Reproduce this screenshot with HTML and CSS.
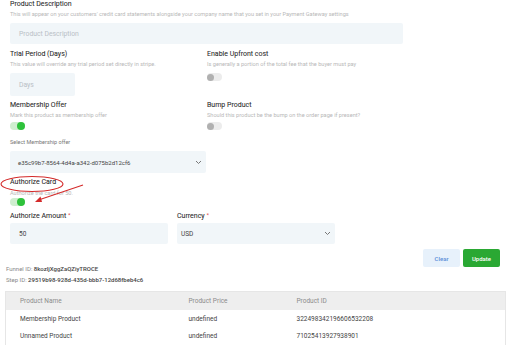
FILE: index.html
```html
<!DOCTYPE html>
<html lang="en">

<head>
    <meta charset="UTF-8">
    <meta name="viewport" content="width=device-width, initial-scale=1.0">
    <title>Product Settings</title>
    <link rel="stylesheet" href="styles.css">
</head>

<body>
    <div class="page">
        <div class="form">
            <div class="field">
                <div class="field-label">Product Description</div>
                <div class="hint">This will appear on your customers' credit card statements alongside your company name that you set in your Payment Gateway settings</div>
                <div class="input input-wide placeholder">Product Description</div>
            </div>

            <div class="row row-trial">
                <div class="field">
                    <div class="field-label">Trial Period (Days)</div>
                    <div class="hint">This value will override any trial period set directly in stripe.</div>
                    <div class="input input-days placeholder">Days</div>
                </div>
                <div class="field">
                    <div class="field-label">Enable Upfront cost</div>
                    <div class="hint">Is generally a portion of the total fee that the buyer must pay</div>
                    <div class="toggle toggle-top"><span class="knob"></span></div>
                </div>
            </div>

            <div class="row row-offer">
                <div class="field">
                    <div class="field-label">Membership Offer</div>
                    <div class="hint">Mark this product as membership offer</div>
                    <div class="toggle on"><span class="knob"></span></div>
                </div>
                <div class="field">
                    <div class="field-label">Bump Product</div>
                    <div class="hint">Should this product be the bump on the order page if present?</div>
                    <div class="toggle"><span class="knob"></span></div>
                </div>
            </div>

            <div class="field select-field">
                <div class="small-label">Select Membership offer</div>
                <div class="input select">
                    <span>e35c99b7-8564-4d4a-a342-d075b2d12cf6</span>
                    <svg class="chevron" width="7" height="5" viewBox="0 0 7 5">
                        <path d="M1 1l2.5 2.5L6 1" fill="none" stroke="#777" stroke-width="1"/>
                    </svg>
                </div>
            </div>

            <div class="field authorize-field">
                <div class="field-label">Authorize Card</div>
                <div class="hint">Authorize the card for 50.</div>
                <div class="toggle on"><span class="knob"></span></div>
            </div>

            <div class="amount-row">
                <div class="field">
                    <div class="field-label">Authorize Amount <span class="req">*</span></div>
                    <div class="input value">50</div>
                </div>
                <div class="field">
                    <div class="field-label">Currency <span class="req">*</span></div>
                    <div class="input select value">
                        <span>USD</span>
                        <svg class="chevron" width="7" height="5" viewBox="0 0 7 5">
                            <path d="M1 1l2.5 2.5L6 1" fill="none" stroke="#777" stroke-width="1"/>
                        </svg>
                    </div>
                </div>
            </div>

            <div class="actions">
                <button class="btn btn-clear">Clear</button>
                <button class="btn btn-update">Update</button>
            </div>
        </div>

        <div class="ids">
            <div>Funnel ID: <b>8kozljXggZaQZiyTROCE</b></div>
            <div>Step ID: <b>29519b98-928d-435d-bbb7-12d68fbeb4c6</b></div>
        </div>

        <table class="products">
            <thead>
                <tr>
                    <th>Product Name</th>
                    <th>Product Price</th>
                    <th>Product ID</th>
                </tr>
            </thead>
            <tbody>
                <tr>
                    <td>Membership Product</td>
                    <td>undefined</td>
                    <td>322498342196606532208</td>
                </tr>
                <tr>
                    <td>Unnamed Product</td>
                    <td>undefined</td>
                    <td>71025413927938901</td>
                </tr>
            </tbody>
        </table>
    </div>

    <!-- red markup drawn on top of the screenshot -->
    <svg class="annotation" width="512" height="345" viewBox="0 0 512 345">
        <ellipse cx="32" cy="184" rx="31" ry="7.5" fill="none" stroke="#d42a2a" stroke-width="1.1"/>
        <path d="M83 185 L40 199.5" stroke="#d42a2a" stroke-width="1.1"/>
        <path d="M35 202 L40.5 196.5 L42 202 Z" fill="#d42a2a"/>
    </svg>
</body>

</html>
```

FILE: styles.css
```css
* {
    margin: 0;
    padding: 0;
    box-sizing: border-box;
    font-family: Roboto, 'Liberation Sans', sans-serif;
}

body {
    background-color: white;
    width: 512px;
    height: 345px;
    overflow: hidden;
    position: relative;
}

.page {
    padding: 0 6px;
}

.form {
    padding: 0 4px;
}

.field-label {
    font-size: 7px;
    line-height: 9px;
    font-weight: 400;
    color: #2a2a2a;
    -webkit-text-stroke: 0.06px #2a2a2a;
}

.req {
    color: #e04848;
    -webkit-text-stroke: 0;
    font-size: 6px;
    position: relative;
    top: -1.5px;
}

.hint {
    font-size: 5.6px;
    line-height: 9px;
    color: #b8b8b8;
    margin-top: 1px;
    white-space: nowrap;
}

.small-label {
    font-size: 5.5px;
    line-height: 9px;
    color: #777;
}

.input {
    background-color: #f1f6f9;
    height: 21px;
    border-radius: 2px;
    font-size: 6px;
    display: flex;
    align-items: center;
    padding-left: 9px;
    color: #444;
}

.input.value {
    font-size: 6.5px;
}

.input.placeholder {
    color: #b9c0c6;
    font-size: 6.8px;
    margin-top: 4px;
}

.input-wide {
    width: 393px;
}

.input-days {
    width: 65px;
    height: 23px;
}

.row {
    display: grid;
    grid-template-columns: 197px 1fr;
}

.row-trial {
    margin-top: 6px;
}

.row-offer {
    margin-top: 5px;
}

.toggle {
    width: 15px;
    height: 8px;
    border-radius: 4px;
    background-color: #ececec;
    margin-top: 2px;
    display: flex;
    align-items: center;
}

.toggle-top {
    margin-top: 4px;
}

.toggle .knob {
    width: 7px;
    height: 7px;
    border-radius: 50%;
    background-color: #b0b0b0;
}

.toggle.on {
    background-color: #cfeecf;
    justify-content: flex-end;
}

.toggle.on .knob {
    width: 8px;
    height: 8px;
    background-color: #2ec23b;
}

.select-field {
    margin-top: 8px;
}

.select {
    justify-content: space-between;
    padding-right: 4px;
}

.select-field .select {
    width: 196px;
    height: 22px;
    margin-top: 4px;
    padding-left: 8px;
}

.chevron {
    display: block;
}

.authorize-field {
    margin-top: 5px;
}

.authorize-field .hint {
    margin-top: 2px;
}

.authorize-field .toggle {
    margin-top: 0;
}

.amount-row {
    display: grid;
    grid-template-columns: 158px 158px;
    gap: 9px;
    margin-top: 5px;
}

.amount-row .input {
    margin-top: 2px;
}

.amount-row .select {
    padding-left: 4px;
}

.actions {
    display: flex;
    justify-content: flex-end;
    gap: 3px;
    margin-top: 5px;
    padding-right: 2px;
}

.btn {
    height: 18px;
    border: none;
    border-radius: 2px;
    font-size: 6px;
    font-weight: 500;
    cursor: pointer;
}

.btn-clear {
    width: 37px;
    background-color: #e7f1fb;
    color: #5b8ed8;
}

.btn-update {
    width: 37px;
    background-color: #2aa833;
    color: white;
}

.ids {
    margin-top: -4px;
    font-size: 6px;
    line-height: 11px;
    color: #8a8a8a;
}

.ids b {
    font-weight: 500;
    color: #444;
}

.products {
    width: 501px;
    margin-top: 6px;
    margin-left: -1px;
    border-collapse: collapse;
    border: 1px solid #e6e6e6;
    font-size: 6.5px;
}

.products th {
    background-color: #eeeeee;
    color: #8c8c8c;
    font-weight: 400;
    text-align: left;
    height: 18px;
}

.products td {
    color: #444;
    height: 18px;
}

.products th:first-child,
.products td:first-child {
    padding-left: 14px;
    width: 183px;
}

.products th:nth-child(2),
.products td:nth-child(2) {
    width: 108px;
}

.annotation {
    position: absolute;
    top: 0;
    left: 0;
    pointer-events: none;
}
```
